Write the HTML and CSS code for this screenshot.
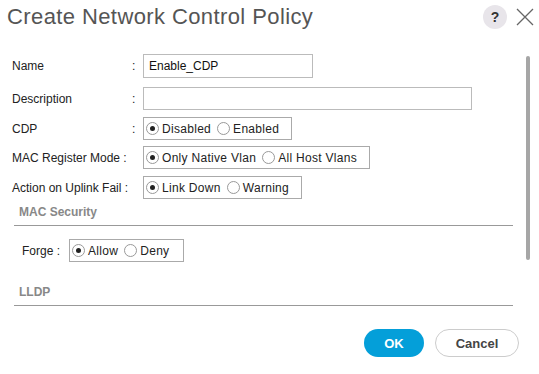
FILE: index.html
```html
<html>
<head>
    <meta charset="UTF-8">
    <title>Create Network Control Policy</title>
    <link rel="stylesheet" href="styles.css">
</head>
<body>
    <div class="dialog">
        <div class="header">
            <h1>Create Network Control Policy</h1>
            <div class="tools">
                <span class="help">?</span>
                <svg class="close" width="18" height="18" viewBox="0 0 18 18"><path d="M1 1L17 17M17 1L1 17" stroke="#666" stroke-width="1.3" fill="none"/></svg>
            </div>
        </div>
        <div class="body">
            <div class="form">
                <div class="row r-name">
                    <label class="lbl">Name</label><span class="colon">:</span>
                    <input class="field short" type="text" value="Enable_CDP">
                </div>
                <div class="row r-desc">
                    <label class="lbl">Description</label><span class="colon">:</span>
                    <input class="field long" type="text" value="">
                </div>
                <div class="row r-cdp">
                    <label class="lbl">CDP</label><span class="colon">:</span>
                    <div class="group">
                        <span class="opt"><i class="radio on"></i>Disabled</span>
                        <span class="opt"><i class="radio"></i>Enabled</span>
                    </div>
                </div>
                <div class="row r-mac">
                    <label class="lbl wide">MAC Register Mode :</label>
                    <div class="group">
                        <span class="opt"><i class="radio on"></i>Only Native Vlan</span>
                        <span class="opt"><i class="radio"></i>All Host Vlans</span>
                    </div>
                </div>
                <div class="row r-act">
                    <label class="lbl wide">Action on Uplink Fail :</label>
                    <div class="group">
                        <span class="opt"><i class="radio on"></i>Link Down</span>
                        <span class="opt"><i class="radio"></i>Warning</span>
                    </div>
                </div>
                <div class="section">
                    <h2>MAC Security</h2>
                    <div class="forge">
                        <label>Forge :</label>
                        <div class="group">
                            <span class="opt"><i class="radio on"></i>Allow</span>
                            <span class="opt"><i class="radio"></i>Deny</span>
                        </div>
                    </div>
                </div>
                <div class="section lldp">
                    <h2>LLDP</h2>
                </div>
            </div>
            <div class="scrollbar"></div>
        </div>
        <div class="footer">
            <button class="ok">OK</button>
            <button class="cancel">Cancel</button>
        </div>
    </div>
</body>
</html>
```

FILE: styles.css
```css
body {
    margin: 0;
    background: #fff;
    font-family: "Liberation Sans", Arial, sans-serif;
    font-size: 12px;
    color: #222;
}
.dialog {
    width: 539px;
    height: 374px;
    overflow: hidden;
}
.header {
    display: flex;
    justify-content: space-between;
    align-items: center;
    height: 33px;
    padding: 0 5px 0 7px;
}
h1 {
    margin: 0;
    font-weight: normal;
    font-size: 22px;
    color: #555;
    letter-spacing: 0.4px;
}
.tools {
    display: flex;
    align-items: center;
    gap: 9px;
}
.help {
    width: 24px;
    height: 24px;
    border-radius: 50%;
    background: #e8e5ea;
    color: #333;
    font-weight: bold;
    font-size: 14px;
    display: flex;
    align-items: center;
    justify-content: center;
}
.close {
    display: block;
}
.body {
    display: flex;
    height: 296px;
}
.form {
    width: 501px;
    padding: 21px 0 0 12px;
}
.row {
    display: flex;
    align-items: center;
}
.r-desc { margin-top: 9px; }
.r-cdp { margin-top: 7px; }
.r-mac { margin-top: 6px; }
.r-act { margin-top: 7px; }
.lbl {
    width: 120px;
}
.lbl.wide {
    width: 131px;
}
.colon {
    width: 11px;
}
.field {
    border: 1px solid #bbb;
    height: 24px;
    padding: 0 5px;
    font-family: "Liberation Sans", Arial, sans-serif;
    font-size: 12px;
    color: #111;
    outline: none;
    margin: 0;
}
.field.short { width: 170px; }
.field.long { width: 329px; height: 23px; }
.group {
    display: flex;
    align-items: center;
    gap: 6px;
    border: 1px solid #aaa;
    height: 21px;
    padding: 0 12px 0 2px;
    letter-spacing: 0.3px;
}
.opt {
    display: flex;
    align-items: center;
    gap: 3px;
}
.radio {
    width: 13px;
    height: 13px;
    border: 1px solid #999;
    border-radius: 50%;
    box-sizing: border-box;
    display: flex;
    align-items: center;
    justify-content: center;
}
.radio.on::after {
    content: "";
    width: 5px;
    height: 5px;
    border-radius: 50%;
    background: #222;
}
.section {
    margin-left: 2px;
}
h2 {
    margin: 0;
    font-size: 12px;
    font-weight: bold;
    color: #888;
    padding: 6px 0 0 5px;
    height: 20px;
    border-bottom: 1px solid #999;
    box-sizing: content-box;
}
.forge {
    display: flex;
    align-items: center;
    gap: 9px;
    margin: 13px 0 0 8px;
}
.forge .group {
    padding-right: 14px;
}
.lldp {
    margin-top: 17px;
}
.scrollbar {
    width: 4px;
    height: 204px;
    margin: 23px 0 0 13px;
    border-radius: 2px;
    background: #a6a6a6;
}
.footer {
    display: flex;
    justify-content: flex-end;
    gap: 11px;
    padding-right: 20px;
}
button {
    height: 28px;
    border-radius: 14px;
    font-family: "Liberation Sans", Arial, sans-serif;
    font-weight: bold;
    font-size: 13px;
    cursor: pointer;
}
.ok {
    width: 60px;
    background: #049fd9;
    border: 0;
    color: #fff;
}
.cancel {
    width: 84px;
    background: #fff;
    border: 1px solid #ccc;
    color: #444;
}
```
